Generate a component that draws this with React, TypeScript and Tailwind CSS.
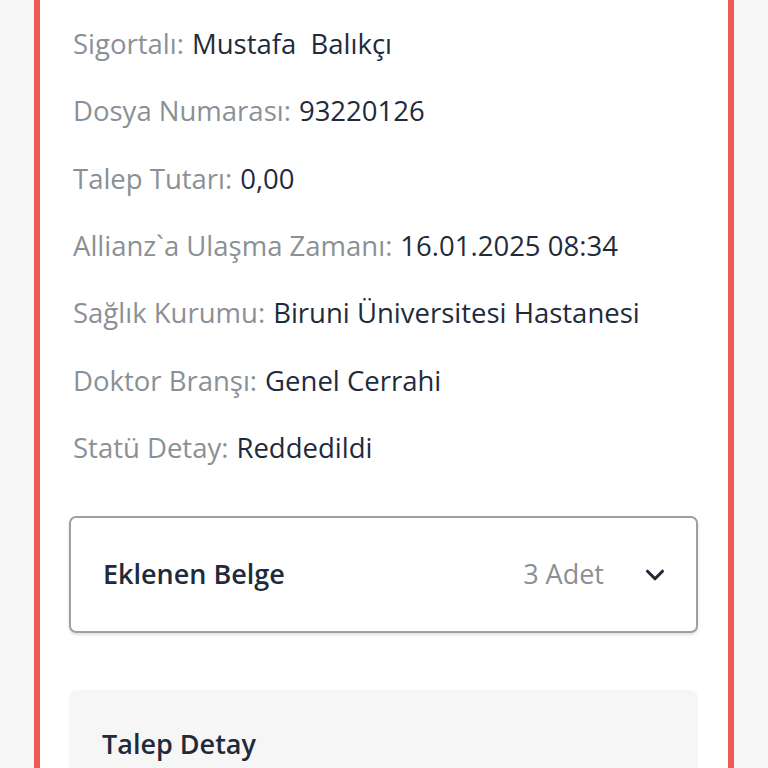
import { ChevronDown } from 'lucide-react';

const rows: [string, string][] = [
  ['Sigortalı:', 'Mustafa\u00a0 Balıkçı'],
  ['Dosya Numarası:', '93220126'],
  ['Talep Tutarı:', '0,00'],
  ['Allianz`a Ulaşma Zamanı:', '16.01.2025 08:34'],
  ['Sağlık Kurumu:', 'Biruni Üniversitesi Hastanesi'],
  ['Doktor Branşı:', 'Genel Cerrahi'],
  ['Statü Detay:', 'Reddedildi'],
];

export default function App() {
  return (
    <div className="min-h-screen h-[768px] overflow-hidden bg-[#f6f6f7] font-['Open_Sans',sans-serif]">
      <div className="ml-[34px] w-[700px] h-full border-x-[6px] border-[#f25a5a] bg-white pl-[29px] pr-[30px] pt-[10px]">
        <div className="flex flex-col px-[4px]">
          {rows.map(([label, value]) => (
            <div key={label} className="h-[67.3px] flex items-center gap-[8px] text-[27.5px]">
              <span className="text-[#8b9096]">{label}</span>
              <span className="text-[#1f2b3b]">{value}</span>
            </div>
          ))}
        </div>

        <div className="mt-[35px] h-[117px] rounded-[7px] border-2 border-[#9aa0a6] shadow-[0_2px_3px_rgba(0,0,0,0.12)] flex items-center pl-[32px] pr-[26px]">
          <span className="text-[27px] font-semibold text-[#1f2b3b]">Eklenen Belge</span>
          <span className="ml-auto text-[27px] text-[#8b9096]">3 Adet</span>
          <ChevronDown size={30} strokeWidth={2.5} className="ml-[36px] text-[#1f2b3b]" />
        </div>

        <div className="mt-[57px] h-[200px] rounded-[8px] bg-[#f6f6f7] px-[33px] pt-[34px]">
          <span className="text-[27px] font-semibold text-[#1f2b3b]">Talep Detay</span>
        </div>
      </div>
    </div>
  );
}
